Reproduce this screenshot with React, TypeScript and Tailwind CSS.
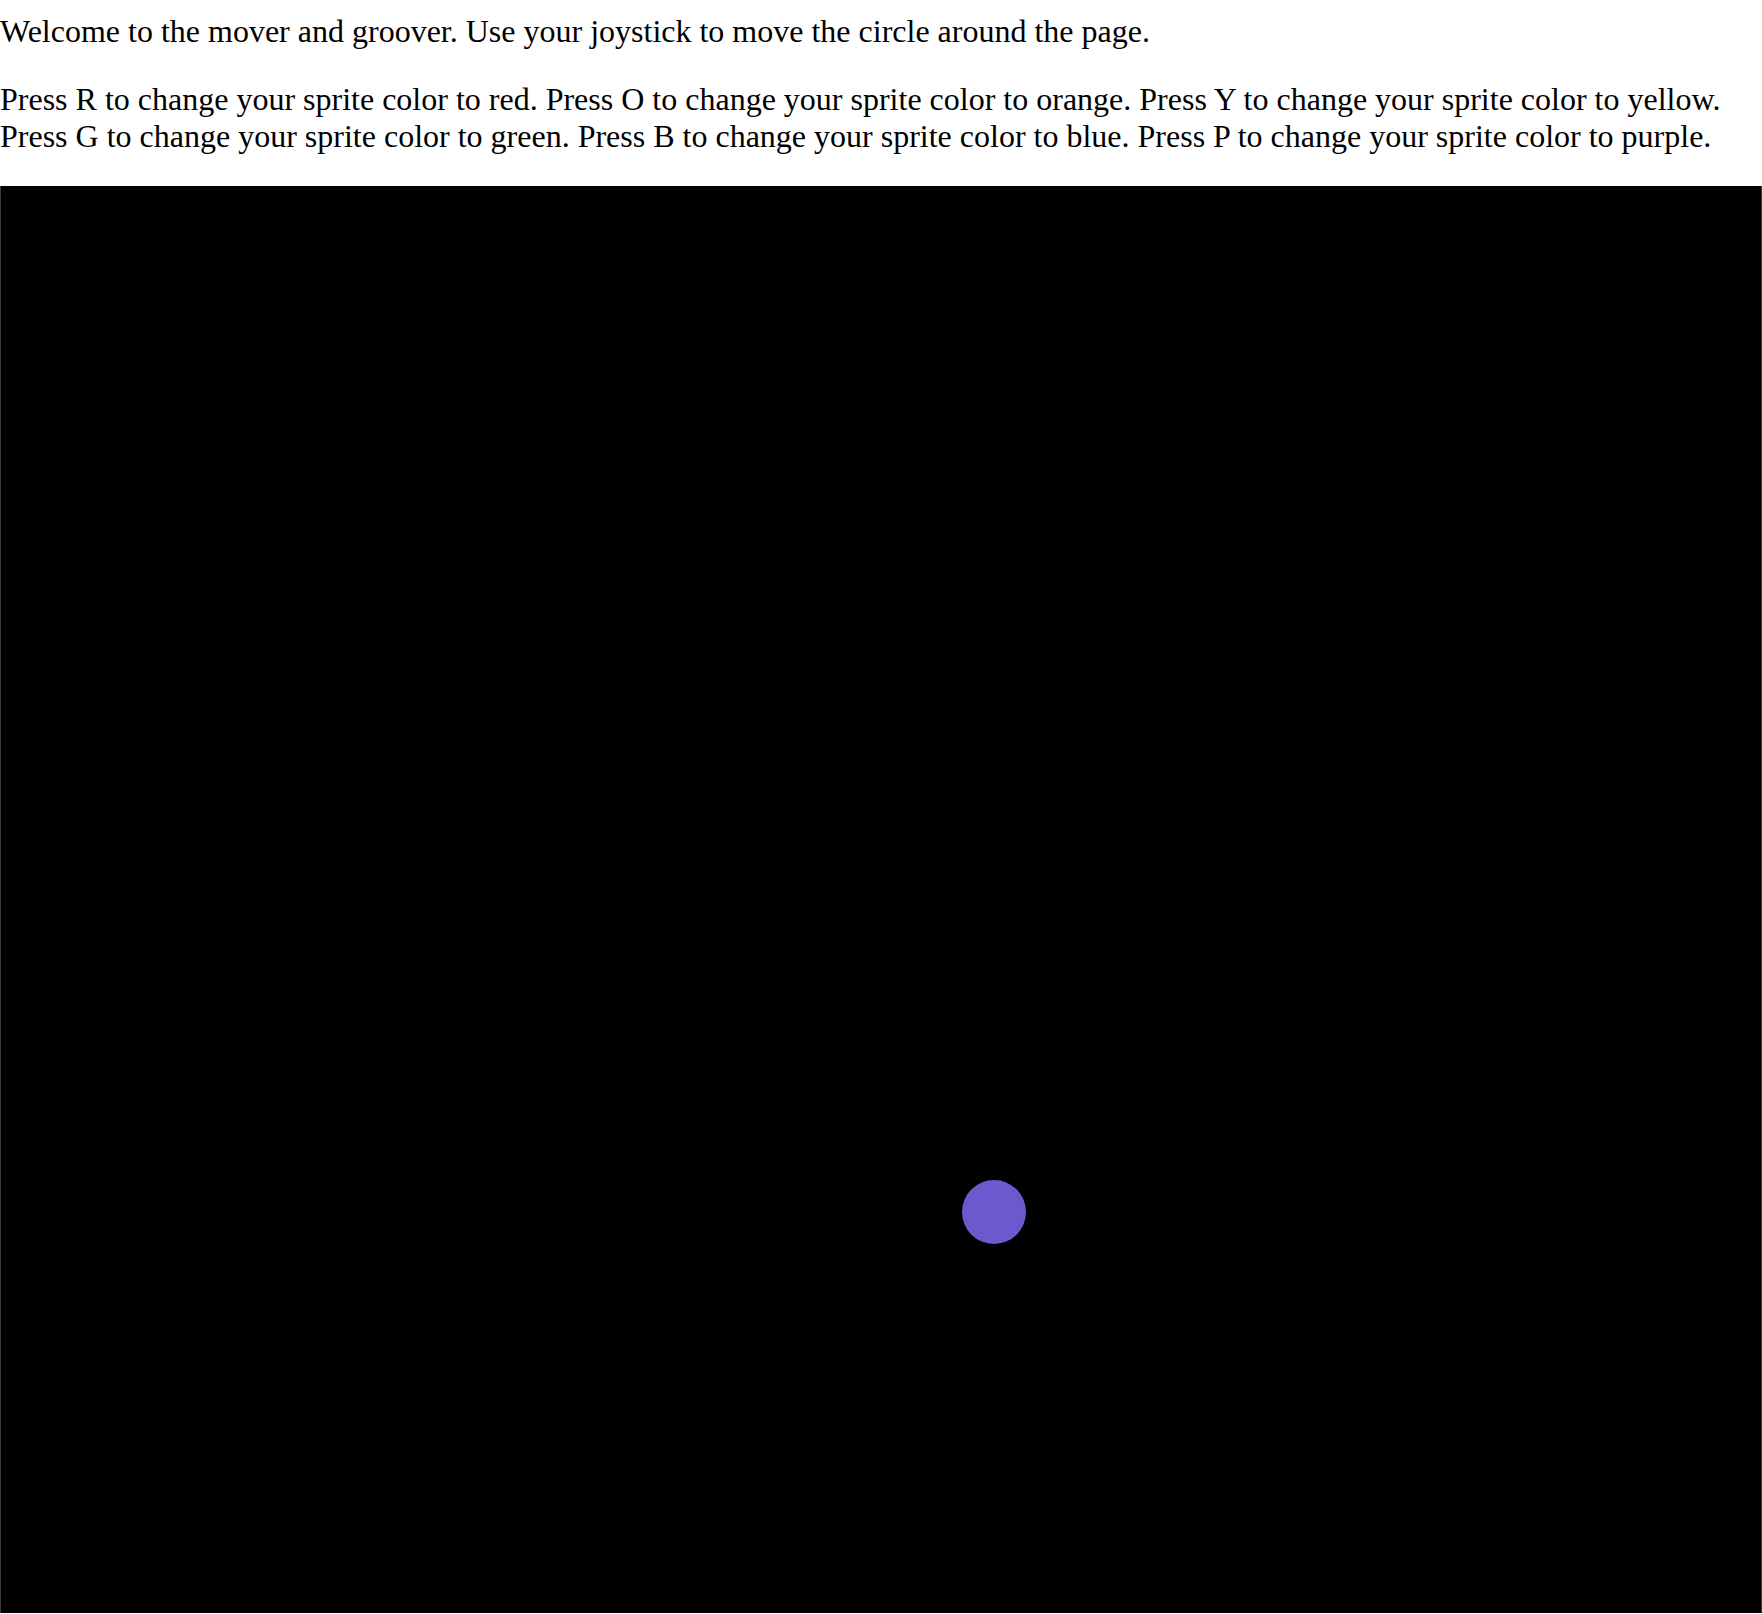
const SPRITE_COLORS = [
  ["R", "red"],
  ["O", "orange"],
  ["Y", "yellow"],
  ["G", "green"],
  ["B", "blue"],
  ["P", "purple"],
];

const App = () => {
  return (
    <div className="bg-white text-black font-['Liberation_Serif','Times_New_Roman',serif] text-[32px] leading-[37px]">
      <p className="pt-[13px]">Welcome to the mover and groover. Use your joystick to move the circle around the page.</p>
      <p className="mt-[31px]">
        {SPRITE_COLORS.slice(0, 3).map(([key, color]) => `Press ${key} to change your sprite color to ${color}.`).join(" ")}
        <br />
        {SPRITE_COLORS.slice(3).map(([key, color]) => `Press ${key} to change your sprite color to ${color}.`).join(" ")}
      </p>
      <div className="relative mt-[31px] h-[1427px] bg-black border-x border-[#3b3b3b]">
        <span className="absolute left-[961px] top-[994px] w-[64px] h-[64px] rounded-full bg-[#6a5acd]" />
      </div>
    </div>
  )
}

export default App
